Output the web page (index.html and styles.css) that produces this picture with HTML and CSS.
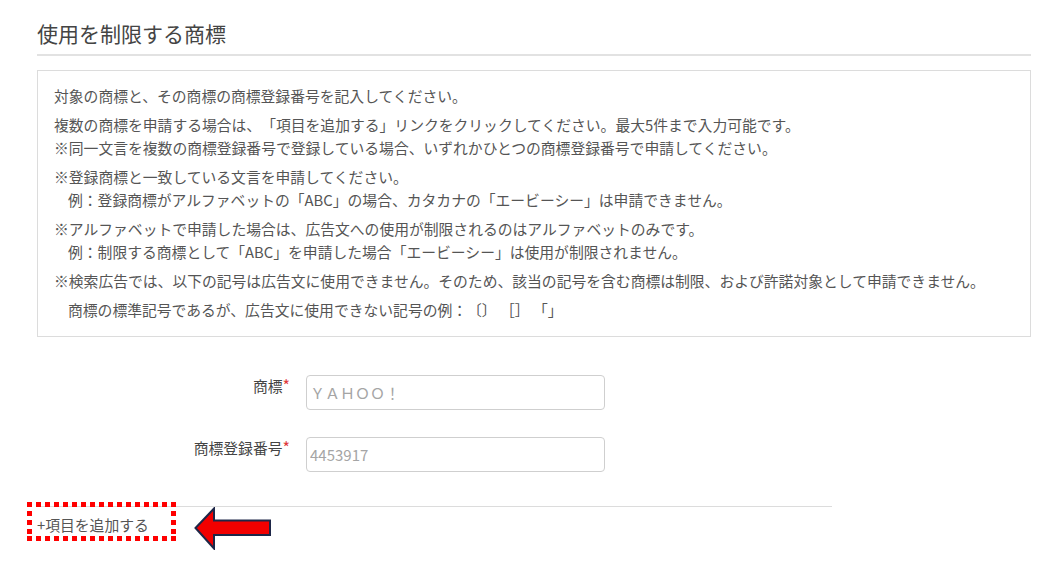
FILE: index.html
```html
<!DOCTYPE html>
<html lang="ja">
<head>
<meta charset="utf-8">
<title>使用を制限する商標</title>
<link rel="stylesheet" href="styles.css">
</head>
<body>
<div class="page">
  <h2 class="title">使用を制限する商標</h2>
  <div class="notice">
    <p>対象の商標と、その商標の商標登録番号を記入してください。</p>
    <p>複数の商標を申請する場合は、「項目を追加する」リンクをクリックしてください。最大5件まで入力可能です。<br>※同一文言を複数の商標登録番号で登録している場合、いずれかひとつの商標登録番号で申請してください。</p>
    <p>※登録商標と一致している文言を申請してください。<span class="indent">例：登録商標がアルファベットの「ABC」の場合、カタカナの「エービーシー」は申請できません。</span></p>
    <p>※アルファベットで申請した場合は、広告文への使用が制限されるのはアルファベットのみです。<span class="indent">例：制限する商標として「ABC」を申請した場合「エービーシー」は使用が制限されません。</span></p>
    <p>※検索広告では、以下の記号は広告文に使用できません。そのため、該当の記号を含む商標は制限、および許諾対象として申請できません。</p>
    <p><span class="indent">商標の標準記号であるが、広告文に使用できない記号の例：〔〕 ［］ 「」</span></p>
  </div>
  <div class="form">
    <div class="row">
      <label class="label">商標<span class="req">*</span></label>
      <input class="field" type="text" value="ＹＡＨＯＯ！">
    </div>
    <div class="row">
      <label class="label">商標登録番号<span class="req">*</span></label>
      <input class="field" type="text" value="4453917">
    </div>
  </div>
  <div class="add-row">
    <a class="add-link">+項目を追加する</a>
    <svg class="dotted" width="149" height="39" viewBox="0 0 149 39">
      <g fill="none" stroke="#ff0000" stroke-width="5" stroke-dasharray="5 4">
        <line x1="0" y1="2.5" x2="149" y2="2.5"/>
        <line x1="0" y1="36.5" x2="149" y2="36.5"/>
        <line x1="2.5" y1="0" x2="2.5" y2="39"/>
        <line x1="146.5" y1="0" x2="146.5" y2="39"/>
      </g>
    </svg>
    <svg class="arrow" width="78" height="43" viewBox="0 0 78 43"><polygon points="1.5,21 20,1.5 20,13.5 76,13.5 76,28 20,28 20,41.5" fill="#f20000" stroke="#1e2748" stroke-width="2" stroke-linejoin="miter"/></svg>
  </div>
</div>
</body>
</html>
```
FILE: styles.css
```css
* { box-sizing: border-box; }
html, body {
  min-height: 100%;
}
body {
  margin: 0;
  background: #fff;
  font-family: "Noto Sans CJK JP", "Noto Sans", sans-serif;
  color: #555;
  text-spacing-trim: space-all;
}
.page {
  padding: 18px 29px 36px 37px;
}
.title {
  margin: 0;
  font-size: 21px;
  font-weight: normal;
  color: #444;
  line-height: 30px;
  padding-bottom: 6px;
  border-bottom: 2px solid #e2e2e2;
}
.notice {
  margin-top: 14px;
  border: 1px solid #dcdcdc;
  padding: 13px 16px 15px 16px;
  font-size: 14.8px;
  line-height: 23px;
  color: #555;
}
.notice p {
  margin: 0 0 6px 0;
}
.notice p:last-child {
  margin-bottom: 0;
}
.indent {
  display: block;
  padding-left: 14px;
}
.form {
  margin-top: 38px;
  display: flex;
  flex-direction: column;
  gap: 27px;
}
.row {
  display: flex;
  align-items: flex-start;
  gap: 16px;
}
.label {
  width: 253px;
  text-align: right;
  font-size: 14.8px;
  line-height: 20px;
  color: #444;
}
.req {
  color: #e03a3a;
  font-size: 16px;
}
.field {
  width: 299px;
  height: 35px;
  border: 1px solid #cfcfcf;
  border-radius: 4px;
  padding: 0 3px;
  font-family: "Noto Sans CJK JP", sans-serif;
  font-size: 15px;
  color: #a5a5a5;
  outline: none;
}
.add-row {
  position: relative;
  width: 795px;
  margin-top: 34px;
  border-top: 1px solid #dcdcdc;
  padding-top: 5px;
}
.add-link {
  display: inline-block;
  font-size: 14.8px;
  line-height: 23px;
  color: #555;
  cursor: pointer;
}
.dotted {
  position: absolute;
  left: -10px;
  top: -5px;
}
.arrow {
  position: absolute;
  left: 157px;
  top: 0px;
}
```
